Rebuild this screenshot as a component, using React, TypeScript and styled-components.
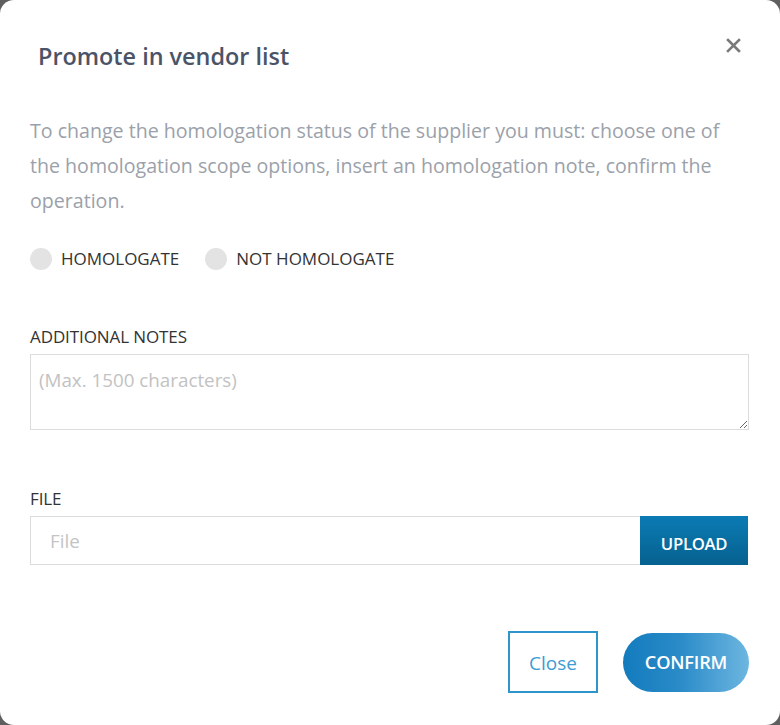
import React, { useState } from 'react';
import styled, { createGlobalStyle } from 'styled-components';

const GlobalStyle = createGlobalStyle`
  html, body {
    margin: 0;
    padding: 0;
    background: #5f5f5f;
  }
  * {
    box-sizing: border-box;
  }
`;

const Modal = styled.div`
  width: 780px;
  height: 725px;
  background: #ffffff;
  border-radius: 14px;
  font-family: 'Open Sans', 'Liberation Sans', sans-serif;
  padding: 0 31px 0 30px;
  display: flex;
  flex-direction: column;
`;

const Header = styled.div`
  display: flex;
  justify-content: space-between;
  align-items: flex-start;
  padding: 38px 8px 0 8px;
  height: 113px;
`;

const Title = styled.h2`
  margin: 0;
  margin-top: 1px;
  font-size: 23.4px;
  line-height: 34px;
  font-weight: 600;
  color: #4b5467;
`;

const CloseIcon = styled.button`
  border: none;
  background: none;
  padding: 0;
  color: #7a7a7a;
  cursor: pointer;
  display: flex;
`;

const Intro = styled.p`
  margin: 0;
  font-size: 19.6px;
  line-height: 35px;
  color: #9ba1aa;
`;

const RadioGroup = styled.div`
  display: flex;
  align-items: center;
  gap: 26px;
  margin-top: 29px;
`;

const RadioOption = styled.label`
  display: flex;
  align-items: center;
  gap: 9px;
  font-size: 17px;
  line-height: 23px;
  color: #333;
  cursor: pointer;
`;

const RadioDot = styled.span<{ $checked: boolean }>`
  width: 22px;
  height: 22px;
  border-radius: 50%;
  background: ${({ $checked }) => ($checked ? '#1c7fc0' : '#e3e3e3')};
`;

const Field = styled.div<{ $top: number }>`
  margin-top: ${({ $top }) => $top}px;
  display: flex;
  flex-direction: column;
`;

const Label = styled.div`
  font-size: 17px;
  color: #333;
  letter-spacing: -0.1px;
  margin-bottom: 7px;
  line-height: 20px;
`;

const NotesArea = styled.textarea`
  width: 719px;
  height: 76px;
  border: 1px solid #dcdcdc;
  padding: 12px 8px;
  font-family: inherit;
  font-size: 18.8px;
  line-height: 26px;
  color: #444;
  resize: vertical;
  outline: none;
  &::placeholder {
    color: #c2c2c2;
  }
`;

const FileRow = styled.div`
  display: flex;
  width: 718px;
  height: 49px;
  border: 1px solid #dcdcdc;
`;

const FileInput = styled.input`
  flex: 1;
  min-width: 0;
  border: none;
  padding: 0 19px;
  font-family: inherit;
  font-size: 18.8px;
  outline: none;
  &::placeholder {
    color: #c4c4c4;
  }
`;

const UploadButton = styled.button`
  width: 108px;
  margin: -1px -1px -1px 0;
  border: none;
  background: linear-gradient(180deg, #0b7bb4 0%, #06618f 100%);
  color: #fff;
  font-family: inherit;
  font-weight: 600;
  font-size: 16.7px;
  letter-spacing: -0.3px;
  padding-top: 6px;
  cursor: pointer;
`;

const Footer = styled.div`
  display: flex;
  justify-content: flex-end;
  align-items: center;
  gap: 25px;
  margin-top: 66px;
`;

const OutlineButton = styled.button`
  width: 90px;
  height: 62px;
  background: #fff;
  border: 2px solid #2e95cb;
  color: #3d9dd2;
  font-family: inherit;
  font-size: 19px;
  padding-top: 3px;
  cursor: pointer;
`;

const PillButton = styled.button`
  width: 126px;
  height: 59px;
  border: none;
  border-radius: 30px;
  background: linear-gradient(90deg, #137bbd 0%, #2a8bc8 45%, #6db6e0 100%);
  color: #fff;
  font-family: inherit;
  font-weight: 600;
  font-size: 18.2px;
  letter-spacing: -0.2px;
  cursor: pointer;
`;

export default function App() {
  const [choice, setChoice] = useState<'yes' | 'no' | null>(null);

  return (
    <>
      <GlobalStyle />
      <Modal>
        <Header>
          <Title>Promote in vendor list</Title>
          <CloseIcon aria-label="close">
            <svg width="15" height="15" viewBox="0 0 15 15">
              <path d="M2 2 L13 13 M13 2 L2 13" stroke="currentColor" strokeWidth="2.6" strokeLinecap="square" />
            </svg>
          </CloseIcon>
        </Header>
        <Intro>
          To change the homologation status of the supplier you must: choose one of the homologation scope
          options, insert an homologation note, confirm the operation.
        </Intro>
        <RadioGroup>
          <RadioOption onClick={() => setChoice('yes')}>
            <RadioDot $checked={choice === 'yes'} />
            HOMOLOGATE
          </RadioOption>
          <RadioOption onClick={() => setChoice('no')}>
            <RadioDot $checked={choice === 'no'} />
            NOT HOMOLOGATE
          </RadioOption>
        </RadioGroup>
        <Field $top={57}>
          <Label>ADDITIONAL NOTES</Label>
          <NotesArea placeholder="(Max. 1500 characters)" />
        </Field>
        <Field $top={59}>
          <Label>FILE</Label>
          <FileRow>
            <FileInput placeholder="File" />
            <UploadButton>UPLOAD</UploadButton>
          </FileRow>
        </Field>
        <Footer>
          <OutlineButton>Close</OutlineButton>
          <PillButton>CONFIRM</PillButton>
        </Footer>
      </Modal>
    </>
  );
}
